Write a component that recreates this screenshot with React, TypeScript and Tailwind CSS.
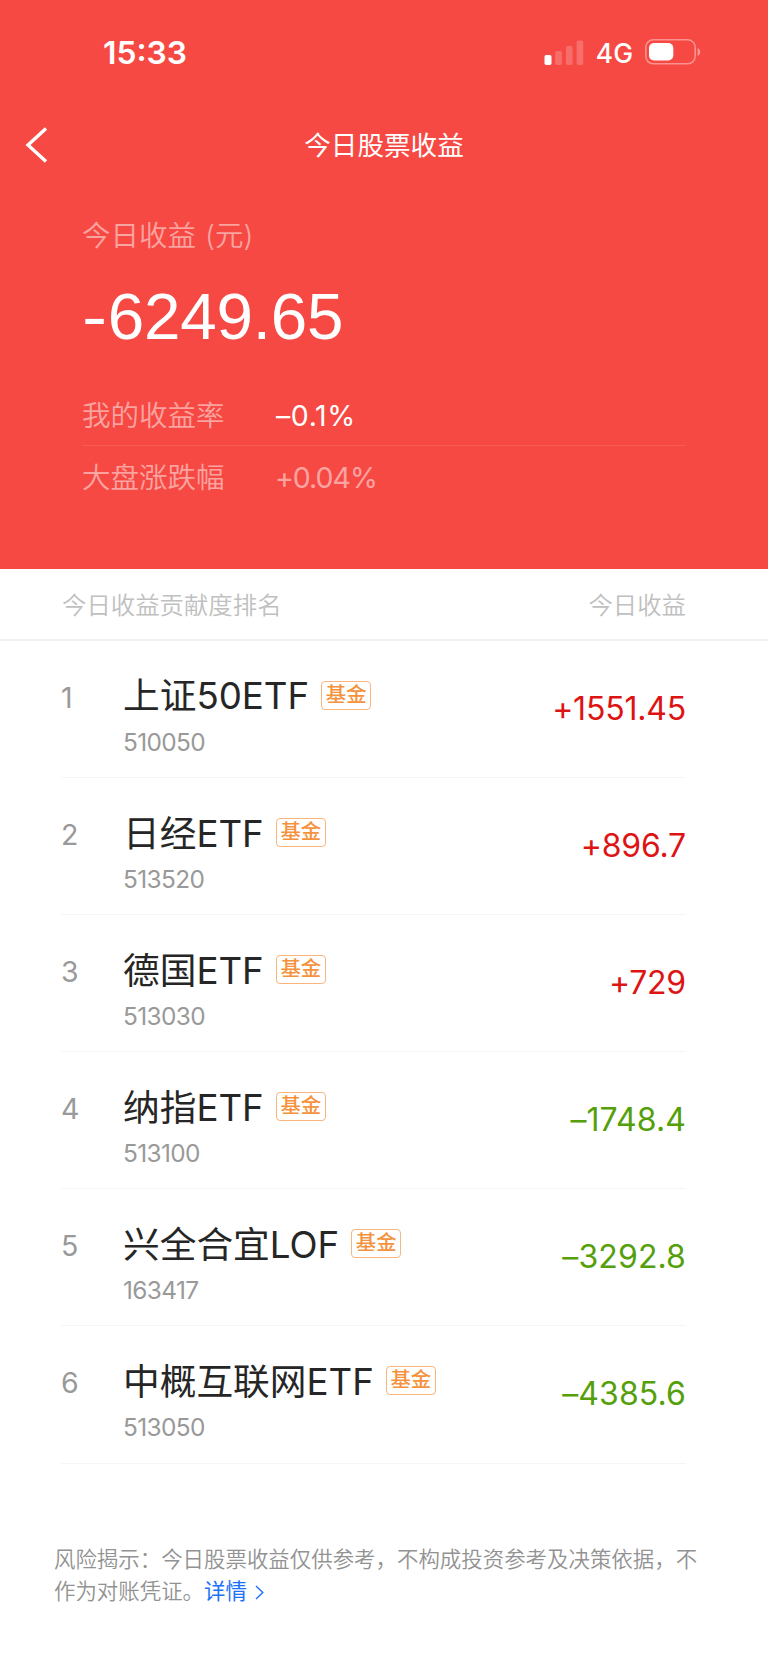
import clsx from "clsx";

interface Holding {
  name: string;
  code: string;
  amount: string;
  up: boolean;
}

const HOLDINGS: Holding[] = [
  { name: "上证50ETF", code: "510050", amount: "+1551.45", up: true },
  { name: "日经ETF", code: "513520", amount: "+896.7", up: true },
  { name: "德国ETF", code: "513030", amount: "+729", up: true },
  { name: "纳指ETF", code: "513100", amount: "–1748.4", up: false },
  { name: "兴全合宜LOF", code: "163417", amount: "–3292.8", up: false },
  { name: "中概互联网ETF", code: "513050", amount: "–4385.6", up: false },
];

export default function App() {
  return (
    <div className="flex min-h-[1665px] w-full flex-col bg-white font-['Inter','Noto_Sans_CJK_SC',sans-serif]">
      <header className="h-[569px] bg-[#f64943] text-white">
        <StatusBar />
        <NavBar />
        <Summary />
      </header>

      {/* column titles */}
      <div className="flex h-[72px] items-center justify-between border-b-2 border-[#f0f0f0] pt-[2px] pr-[82px] pl-[62px] text-[24.4px] font-[350] text-[#c0c0c0]">
        <span>今日收益贡献度排名</span>
        <span>今日收益</span>
      </div>

      <ul className="pr-[82px] pl-[61px]">
        {HOLDINGS.map((h, i) => (
          <HoldingRow key={h.code} rank={i + 1} holding={h} />
        ))}
      </ul>

      <footer className="mt-[79px] pl-[54px] text-[21.45px] leading-[32px] font-[350] text-[#929292]">
        <p>风险揭示：今日股票收益仅供参考，不构成投资参考及决策依据，不</p>
        <div className="flex items-center">
          <span>作为对账凭证。</span>
          <a className="flex items-center font-normal text-[#1b72f8]">
            详情
            <svg className="mt-[3px] ml-[8px] h-[15px] w-[9px]" viewBox="0 0 9 15" fill="none" stroke="currentColor" strokeWidth="1.4">
              <path d="M1 1l6.8 6.5L1 14" />
            </svg>
          </a>
        </div>
      </footer>
    </div>
  );
}

function StatusBar() {
  return (
    <div className="flex h-[104px] items-center justify-between pr-[67px] pl-[103px]">
      <span className="mt-[2px] text-[31.8px] leading-none font-semibold">15:33</span>
      <div className="flex items-center">
        <svg className="h-[25px] w-[40px]" viewBox="0 0 40 25" fill="#fff">
          <rect x="0.5" y="15" width="7" height="10" rx="1.8" />
          <g opacity="0.2">
            <rect x="11.2" y="11" width="6.6" height="14" rx="1.8" />
            <rect x="22" y="6" width="6.6" height="19" rx="1.8" />
            <rect x="32.6" y="0.5" width="6.6" height="24.5" rx="1.8" />
          </g>
        </svg>
        <span className="mt-[3px] ml-3 text-[26.5px] leading-none font-medium">4G</span>
        <svg className="ml-3 h-[26px] w-[56px]" viewBox="0 0 56 26" fill="#fff">
          <rect x="0.8" y="0.8" width="49.4" height="24" rx="7.5" fill="none" stroke="#fff" strokeOpacity="0.4" strokeWidth="1.6" />
          <rect x="4" y="4" width="24.3" height="17.5" rx="5" />
          <path d="M52.6 9v8c1.6-.7 2.6-2.2 2.6-4s-1-3.3-2.6-4z" opacity="0.45" />
        </svg>
      </div>
    </div>
  );
}

function NavBar() {
  return (
    <div className="grid h-[82px] grid-cols-[1fr_auto_1fr] items-center px-[25px]">
      <svg className="h-[36px] w-[24px]" viewBox="0 0 24 36" fill="none" stroke="#fff" strokeWidth="3.4">
        <path d="M21 1.5L3 18l18 16.5" />
      </svg>
      <h1 className="mt-px text-[26.6px] leading-none">今日股票收益</h1>
    </div>
  );
}

function Summary() {
  return (
    <div className="flex flex-col pr-[82px] pl-[82px] text-[28.5px]">
      <div className="mt-[30px] leading-[40px] font-[350] text-white/50">
        今日收益 <span className="ml-px">(元)</span>
      </div>
      <div className="mt-[26px] font-['Liberation_Sans',sans-serif] text-[65.6px] leading-[70px] tracking-[-0.2px]">
        <span className="mr-[4px] inline-block origin-left scale-x-115">-</span>6249.65
      </div>
      <div className="mt-[33px] flex h-[61px] items-center border-b border-white/10 pt-[3px]">
        <span className="w-[194px] font-[350] text-white/50">我的收益率</span>
        <span className="tracking-[0.6px]">–0.1%</span>
      </div>
      <div className="flex h-[62px] items-center pt-[2px] text-white/50">
        <span className="w-[193px] font-[350]">大盘涨跌幅</span>
        <span className="tracking-[-1px]">+0.04%</span>
      </div>
    </div>
  );
}

function HoldingRow({ rank, holding }: { rank: number; holding: Holding }) {
  return (
    <li className="flex h-[137.1px] border-b border-[#f5f5f5]">
      <span className="mt-[37px] w-[62px] text-[28.5px] leading-[40px] text-[#999]">{rank}</span>
      <div className="flex-1">
        <div className="mt-[31px] flex h-[48px] items-center">
          <span className="text-[36.7px] text-[#262626]">{holding.name}</span>
          <span className="mb-[2px] ml-3 flex h-[29px] w-[50px] items-center justify-center rounded-[4px] border border-[#f9b57c] text-[20.4px] leading-none font-medium text-[#f5923e]">
            基金
          </span>
        </div>
        <div className="mt-[6px] text-[24.4px] leading-[32px] tracking-[-0.6px] text-[#999]">{holding.code}</div>
      </div>
      <span className={clsx("mt-[48px] text-[32px] leading-[40px]", holding.up ? "tracking-[-0.2px] text-[#dd1414]" : "tracking-[0.1px] text-[#55a00a]")}>
        {holding.amount}
      </span>
    </li>
  );
}
